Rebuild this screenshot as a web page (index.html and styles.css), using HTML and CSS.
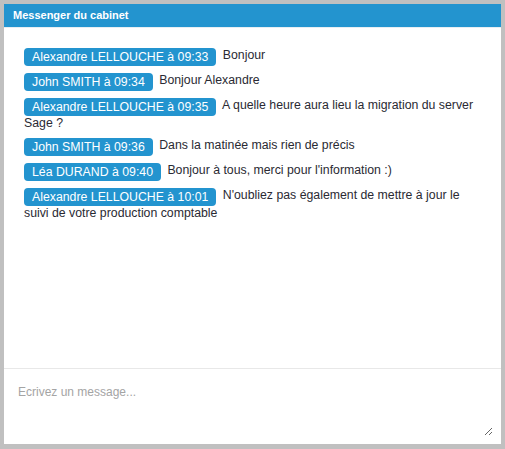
FILE: index.html
```html
<!DOCTYPE html>
<html lang="fr">

<head>
    <meta charset="UTF-8">
    <meta name="viewport" content="width=device-width, initial-scale=1.0">
    <title>Messenger du cabinet</title>
    <link rel="stylesheet" href="styles.css">
</head>

<body>
    <div class="messenger">
        <div class="messenger-header">Messenger du cabinet</div>

        <div class="messages">
            <div class="message"><span class="author">Alexandre LELLOUCHE à 09:33</span> Bonjour</div>
            <div class="message"><span class="author">John SMITH à 09:34</span> Bonjour Alexandre</div>
            <div class="message"><span class="author">Alexandre LELLOUCHE à 09:35</span> A quelle heure aura lieu la migration du server Sage ?</div>
            <div class="message"><span class="author">John SMITH à 09:36</span> Dans la matinée mais rien de précis</div>
            <div class="message"><span class="author">Léa DURAND à 09:40</span> Bonjour à tous, merci pour l'information :)</div>
            <div class="message"><span class="author">Alexandre LELLOUCHE à 10:01</span> N'oubliez pas également de mettre à jour le suivi de votre production comptable</div>
        </div>

        <div class="composer">
            <textarea placeholder="Ecrivez un message..."></textarea>
        </div>
    </div>
</body>

</html>
```

FILE: styles.css
```css
/* Reset */
* {
    margin: 0;
    padding: 0;
    box-sizing: border-box;
}

html,
body {
    height: 100%;
}

body {
    font-family: 'Liberation Sans', Arial, sans-serif;
    background: #c0c0c0;
    padding: 4px 4px 5px 4px;
    color: #2a2a33;
}

/* Panel */
.messenger {
    height: 100%;
    background: #fff;
    display: flex;
    flex-direction: column;
}

.messenger-header {
    background: #2394cf;
    color: #fff;
    font-size: 11px;
    font-weight: bold;
    height: 24px;
    line-height: 23px;
    padding-left: 9px;
    border-bottom: 1px solid #e6eef3;
}

/* Messages */
.messages {
    flex: 1;
    padding: 20px 20px 0 20px;
}

.message {
    font-size: 12.3px;
    line-height: 15px;
    margin-bottom: 7px;
}

.author {
    display: inline-block;
    background: #2394cf;
    color: #fff;
    padding: 1px 8px;
    line-height: 16px;
    border-radius: 4px;
    margin-right: 3px;
    vertical-align: top;
}

/* Composer */
.composer {
    border-top: 1px solid #e8e8e8;
    padding: 0 8px 8px 8px;
}

textarea {
    display: block;
    width: 100%;
    height: 67px;
    border: none;
    outline: none;
    padding: 16px 6px;
    font-family: 'Liberation Sans', Arial, sans-serif;
    font-size: 12px;
    color: #333;
    resize: vertical;
}

textarea::placeholder {
    color: #a4a4a4;
}
```
